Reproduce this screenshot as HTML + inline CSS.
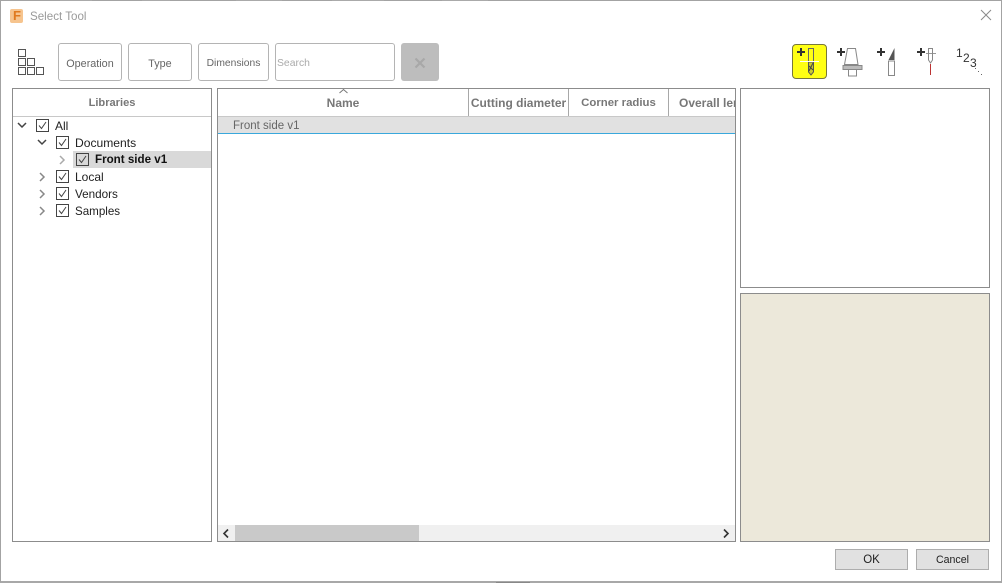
<!DOCTYPE html>
<html><head><meta charset="utf-8"><style>
html,body{margin:0;padding:0;background:#fff}
#w{position:relative;width:1002px;height:583px;overflow:hidden;background:#fff;font-family:"Liberation Sans",sans-serif;font-size:12px;color:#333}
#w div{position:absolute;box-sizing:border-box}
.b{border:1px solid #b4b4b4;border-radius:3px;background:#fff;color:#666;text-align:center;font-size:10.8px;line-height:40px;top:43px;height:38px}
.p{border:1px solid #8c8c8c;background:#fff}
.h{font-weight:bold;color:#777;white-space:nowrap;line-height:14px;font-size:12px}
.t{white-space:nowrap;line-height:14px;font-size:12px;color:#222}
.r{height:1px;top:0;background:#aaa}
svg{position:absolute;overflow:visible}
</style></head><body><div id="w">
<div style="left:0;top:0;width:1002px;height:583px;border:1px solid #a3a3a3;border-bottom:2px solid #a8a8a8"></div>
<div class="r" style="left:60px;width:32px"></div><div class="r" style="left:142px;width:28px"></div><div class="r" style="left:236px;width:46px"></div><div class="r" style="left:332px;width:52px"></div><div class="r" style="left:442px;width:46px"></div>
<div class="r" style="left:496px;top:582px;width:34px;background:#888"></div>
<div style="left:10px;top:9px;width:13px;height:14px;background:#f6c48e;border-radius:2px"></div>
<div style="left:13px;top:9px;font:bold 13px/14px 'Liberation Sans',sans-serif;color:#e07a1f">F</div>
<div style="left:30px;top:10px;font-size:11.6px;line-height:14px;color:#9a9a9a">Select Tool</div>
<svg style="left:980px;top:9px" width="12" height="12"><path d="M1 1L11 11M11 1L1 11" stroke="#8a8a8a" fill="none"/></svg>

<svg style="left:18px;top:49px" width="28" height="27" fill="none" stroke="#555"><rect x=".5" y=".5" width="7" height="7"/><rect x=".5" y="9.500" width="7" height="7"/><rect x="9.500" y="9.500" width="7" height="7"/><rect x=".5" y="18.500" width="7" height="7"/><rect x="9.500" y="18.500" width="7" height="7"/><rect x="18.500" y="18.500" width="7" height="7"/></svg>
<div class="b" style="left:58px;width:64px">Operation</div>
<div class="b" style="left:128px;width:64px">Type</div>
<div class="b" style="left:198px;width:71px;font-size:10.3px">Dimensions</div>
<div class="b" style="left:275px;width:120px;text-align:left;padding-left:1px;color:#aaa;font-size:10.4px">Search</div>
<div style="left:401px;top:43px;width:38px;height:38px;background:#bdbdbd;border-radius:3px"></div>
<svg style="left:414px;top:57px" width="12" height="12"><path d="M1.500 1.500L10.500 10.500M10.500 1.500L1.500 10.500" stroke="#a8a8a8" stroke-width="2.200"/></svg>

<div style="left:792px;top:44px;width:35px;height:35px;background:#ffff14;border:1px solid #77773a;border-radius:4px"></div>
<svg style="left:792px;top:44px" width="35" height="35" fill="none"><path d="M5 8H13M9 4V12" stroke="#333" stroke-width="2"/><path d="M16.500 17V4.500H21.500V17" stroke="#666"/><path d="M16.500 18V28L19 31L21.500 28V18Z" stroke="#555" fill="#c9c930"/><path d="M17 22L21 26M17 27L21 19" stroke="#444"/><path d="M8 17.500H27" stroke="#fff"/></svg>
<svg style="left:836px;top:44px" width="30" height="34" fill="none"><path d="M1 8H9M5 4V12" stroke="#333" stroke-width="2"/><path d="M11.500 4.500H19.500L22 20.500H8.500Z" stroke="#888"/><path d="M7 21.500H26V25.500H7Z" stroke="#888" fill="#bbb"/><path d="M12.500 26V32H20.500V26" stroke="#888"/></svg>
<svg style="left:876px;top:44px" width="24" height="34" fill="none"><path d="M1 8H9M5 4V12" stroke="#333" stroke-width="2"/><path d="M12.500 17V31.500H18.500V17Z" stroke="#888"/><path d="M18.500 4L12.500 16H18.500Z" fill="#555"/></svg>
<svg style="left:916px;top:44px" width="24" height="34" fill="none"><path d="M1 8H9M5 4V12" stroke="#333" stroke-width="2"/><path d="M10 9.500H20" stroke="#999"/><path d="M12.500 4.500H16.500V16L14.500 19L12.500 16Z" stroke="#888"/><path d="M14.500 20V31" stroke="#b33"/></svg>
<div style="left:956px;top:47px;font-size:12px;line-height:12px;color:#333">1</div>
<div style="left:963px;top:52px;font-size:12px;line-height:12px;color:#333">2</div>
<div style="left:970px;top:57px;font-size:12px;line-height:12px;color:#333">3</div>
<svg style="left:974px;top:68px" width="10" height="8"><path d="M1 0h1v1H1zM4 3h1v1H4zM7 6h1v1H7z" fill="#666"/></svg>

<div class="p" style="left:12px;top:88px;width:200px;height:454px"></div>
<div style="left:13px;top:116px;width:198px;height:1px;background:#c8c8c8"></div>
<div class="h" style="left:13px;top:96px;width:198px;text-align:center;font-size:11.1px">Libraries</div>
<div style="left:73px;top:151px;width:138px;height:17px;background:#d9d9d9"></div>
<svg style="left:17px;top:120px" width="60" height="100" fill="none"><path d="M1 3L5 7L9 3M21 20L25 24L29 20" stroke="#444" stroke-width="1.500"/><path d="M43 36L47 40L43 44" stroke="#aaa" stroke-width="1.500"/><path d="M23 53L27 57L23 61M23 70L27 74L23 78M23 87L27 91L23 95" stroke="#888" stroke-width="1.500"/></svg>
<svg style="left:36px;top:119px" width="60" height="100" fill="none" stroke="#444"><g><rect x=".5" y=".5" width="12" height="12"/><path d="M3 6.500L5.500 9.500L10 3"/></g><g transform="translate(20,17)"><rect x=".5" y=".5" width="12" height="12"/><path d="M3 6.500L5.500 9.500L10 3"/></g><g transform="translate(40,34)"><rect x=".5" y=".5" width="12" height="12"/><path d="M3 6.500L5.500 9.500L10 3"/></g><g transform="translate(20,51)"><rect x=".5" y=".5" width="12" height="12"/><path d="M3 6.500L5.500 9.500L10 3"/></g><g transform="translate(20,68)"><rect x=".5" y=".5" width="12" height="12"/><path d="M3 6.500L5.500 9.500L10 3"/></g><g transform="translate(20,85)"><rect x=".5" y=".5" width="12" height="12"/><path d="M3 6.500L5.500 9.500L10 3"/></g></svg>
<div class="t" style="left:55px;top:119px">All</div>
<div class="t" style="left:75px;top:136px;font-size:12.1px">Documents</div>
<div class="t" style="left:95px;top:153px;font-weight:bold;color:#111;font-size:11.6px">Front side v1</div>
<div class="t" style="left:75px;top:170px">Local</div>
<div class="t" style="left:75px;top:188px;font-size:11.7px">Vendors</div>
<div class="t" style="left:75px;top:205px;font-size:11.6px">Samples</div>

<div class="p" style="left:217px;top:88px;width:519px;height:454px"></div>
<div style="left:218px;top:116px;width:517px;height:1px;background:#c8c8c8"></div>
<div style="left:468px;top:89px;width:1px;height:27px;background:#a8a8a8"></div>
<div style="left:568px;top:89px;width:1px;height:27px;background:#a8a8a8"></div>
<div style="left:668px;top:89px;width:1px;height:27px;background:#a8a8a8"></div>
<svg style="left:339px;top:89px" width="10" height="5" fill="none"><path d="M.5 4L4.500 .5L8.500 4" stroke="#777"/></svg>
<div class="h" style="left:218px;top:96px;width:250px;text-align:center">Name</div>
<div class="h" style="left:469px;top:96px;width:99px;text-align:center">Cutting diameter</div>
<div class="h" style="left:569px;top:96px;width:99px;text-align:center;font-size:11.4px">Corner radius</div>
<div style="left:669px;top:96px;width:66px;height:14px;overflow:hidden"><div class="h" style="left:10px;top:0">Overall length</div></div>
<div style="left:218px;top:117px;width:517px;height:16px;background:#e1e1e1"></div>
<div style="left:218px;top:133px;width:517px;height:1px;background:#3aa8dc"></div>
<div class="t" style="left:233px;top:119px;color:#666;font-size:11.5px">Front side v1</div>
<div style="left:218px;top:525px;width:517px;height:16px;background:#f0f0f0"></div>
<div style="left:235px;top:525px;width:184px;height:16px;background:#c9c9c9"></div>
<svg style="left:222px;top:529px" width="8" height="9" fill="none"><path d="M6 .5L2 4.500L6 8.500" stroke="#333" stroke-width="1.600"/></svg>
<svg style="left:722px;top:529px" width="8" height="9" fill="none"><path d="M2 .5L6 4.500L2 8.500" stroke="#333" stroke-width="1.600"/></svg>

<div class="p" style="left:740px;top:88px;width:250px;height:200px"></div>
<div class="p" style="left:740px;top:293px;width:250px;height:249px;background:#ece8da"></div>

<div style="left:835px;top:549px;width:73px;height:21px;background:#e1e1e1;border:1px solid #adadad;text-align:center;line-height:20px;font-size:11.5px;color:#222">OK</div>
<div style="left:916px;top:549px;width:73px;height:21px;background:#e1e1e1;border:1px solid #adadad;text-align:center;line-height:20px;font-size:10.6px;color:#222">Cancel</div>
</div></body></html>
